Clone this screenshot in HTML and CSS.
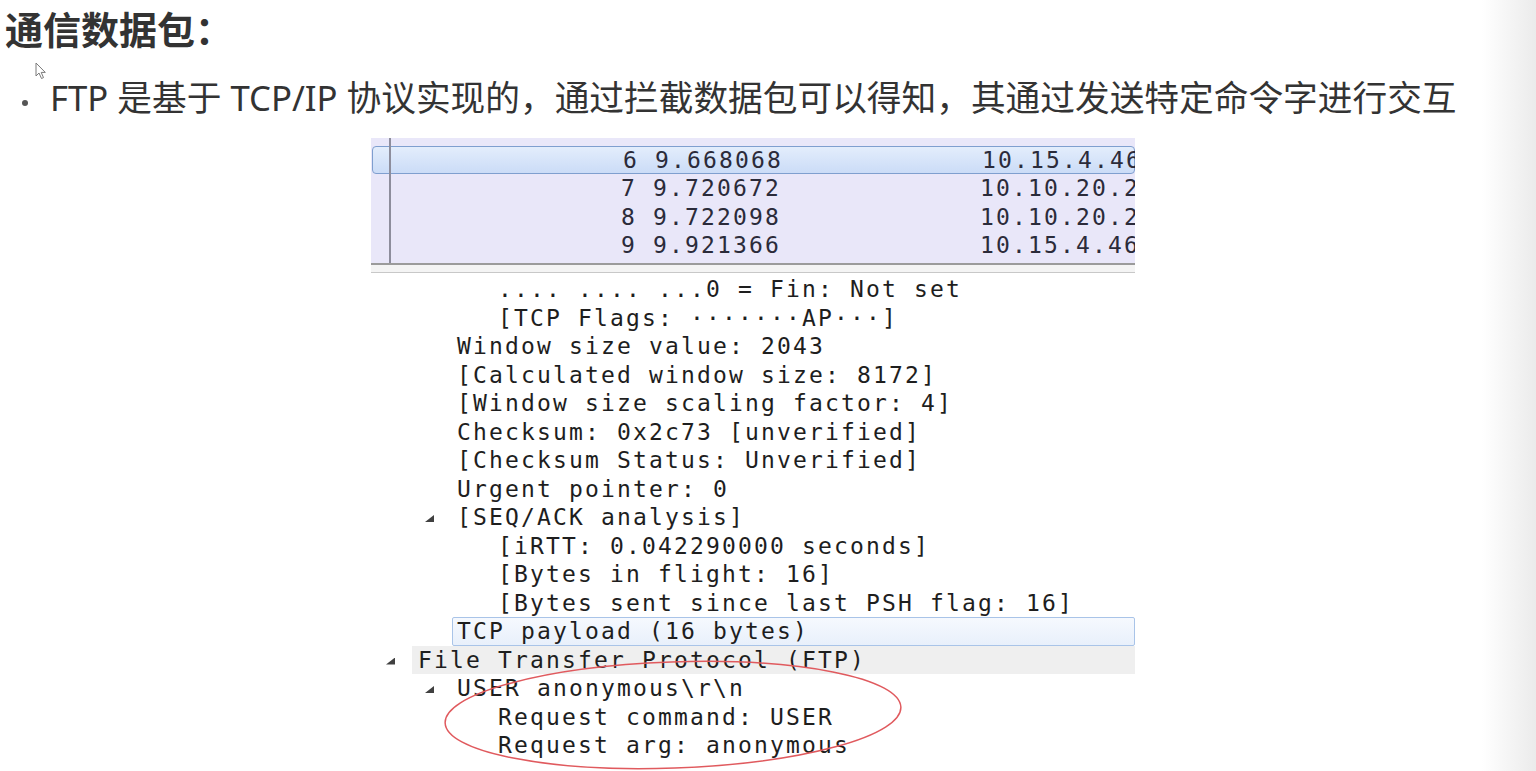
FILE: index.html
```html
<!DOCTYPE html>
<html lang="zh-CN">
<head>
<meta charset="utf-8">
<title>通信数据包</title>
<link rel="stylesheet" href="styles.css">
</head>
<body>
<div class="page">
  <h1 class="title">通信数据包：</h1>
  <div class="bullet"><span class="dot"></span><span class="btext">FTP 是基于 TCP/IP 协议实现的，通过拦截数据包可以得知，其通过发送特定命令字进行交互</span></div>
  <div class="shot">
    <div class="plist">
      <div class="prow sel"><span class="no">6</span><span class="time">9.668068</span><span class="ip">10.15.4.46</span></div>
      <div class="prow"><span class="no">7</span><span class="time">9.720672</span><span class="ip">10.10.20.2</span></div>
      <div class="prow"><span class="no">8</span><span class="time">9.722098</span><span class="ip">10.10.20.2</span></div>
      <div class="prow"><span class="no">9</span><span class="time">9.921366</span><span class="ip">10.15.4.46</span></div>
    </div>
    <div class="splitter"></div>
    <div class="details">
      <div class="drow l2">.... .... ...0 = Fin: Not set</div>
      <div class="drow l2">[TCP Flags: ·······AP···]</div>
      <div class="drow l1">Window size value: 2043</div>
      <div class="drow l1">[Calculated window size: 8172]</div>
      <div class="drow l1">[Window size scaling factor: 4]</div>
      <div class="drow l1">Checksum: 0x2c73 [unverified]</div>
      <div class="drow l1">[Checksum Status: Unverified]</div>
      <div class="drow l1">Urgent pointer: 0</div>
      <div class="drow l1 exp">[SEQ/ACK analysis]</div>
      <div class="drow l2">[iRTT: 0.042290000 seconds]</div>
      <div class="drow l2">[Bytes in flight: 16]</div>
      <div class="drow l2">[Bytes sent since last PSH flag: 16]</div>
      <div class="drow boxed">TCP payload (16 bytes)</div>
      <div class="drow grey exp">File Transfer Protocol (FTP)</div>
      <div class="drow l1 exp">USER anonymous\r\n</div>
      <div class="drow l2">Request command: USER</div>
      <div class="drow l2">Request arg: anonymous</div>
    </div>
    <svg class="ring" width="764" height="200" viewBox="0 0 764 200">
      <ellipse cx="302" cy="117" rx="228" ry="53" transform="rotate(-2 302 117)" fill="none" stroke="#e05a5e" stroke-width="1.5"/>
    </svg>
  </div>
  <svg class="cursor" width="13" height="18" viewBox="0 0 13 18">
    <path d="M1 1 L1 14 L4 11 L6.5 16.5 L8.5 15.6 L6.2 10.4 L10.3 10.4 Z" fill="#fff" stroke="#7a7a7a" stroke-width="1" stroke-linejoin="round"/>
  </svg>
</div>
</body>
</html>
```

FILE: styles.css
```css
html, body {
  margin: 0;
  padding: 0;
}

body {
  width: 1536px;
  height: 771px;
  overflow: hidden;
  background: linear-gradient(to right, #ffffff 1482px, #ebebeb 1536px);
  font-family: "Noto Sans", "Noto Sans CJK SC", sans-serif;
  color: #333;
}

.page {
  position: relative;
  height: 771px;
}

.title {
  margin: 0;
  padding: 9px 0 0 5px;
  font: 700 38px/38px "Noto Sans CJK SC", sans-serif;
  color: #333;
}

.bullet {
  display: flex;
  align-items: center;
  height: 34px;
  margin-top: 34px;
  padding-left: 22px;
}

.dot {
  width: 6px;
  height: 6px;
  border-radius: 50%;
  background: #555;
  margin-top: 9px;
  margin-right: 22px;
  flex: none;
}

.btext {
  font: 400 34.7px/34px "Noto Sans", "Noto Sans CJK SC", sans-serif;
  color: #333;
  white-space: nowrap;
}

.shot {
  position: relative;
  margin: 23px 0 0 371px;
  width: 764px;
  overflow: hidden;
  font: 400 23px/28.5px "DejaVu Sans Mono", "Liberation Mono", monospace;
  letter-spacing: 2.15px;
}

.plist {
  position: relative;
  background: #e9e7f9;
  padding: 7.5px 0 3.5px;
  color: #2b2b3a;
}

.plist::after {
  content: "";
  position: absolute;
  left: 18px;
  top: 0;
  bottom: 0;
  width: 2px;
  background: #8d8d9c;
}

.prow {
  display: grid;
  grid-template-columns: 266px 343px 1fr;
  height: 28.5px;
  box-sizing: border-box;
  white-space: pre;
}

.prow .no {
  text-align: right;
}

.prow .time {
  padding-left: 16px;
}

.prow.sel {
  background: linear-gradient(#e3edfc, #cbdcf7);
  border: 1px solid #7f9fcf;
  border-radius: 4px;
  margin-left: 1px;
  line-height: 26.5px;
}

.prow.sel .no {
  margin-left: -1px;
}

.splitter {
  height: 12px;
  box-sizing: border-box;
  border-top: 2px solid #9b9b9b;
  background: linear-gradient(#f4f4f4 0, #f4f4f4 7px, #c8c8c8 7px, #c8c8c8 8px, #ffffff 8px);
}

.details {
  background: #fff;
  color: #1e1e1e;
  padding-bottom: 20px;
}

.drow {
  height: 28.5px;
  white-space: pre;
  box-sizing: border-box;
}

.l1 {
  padding-left: 86px;
}

.l2 {
  padding-left: 127px;
}

.boxed {
  margin-left: 81px;
  padding-left: 4px;
  border: 1px solid #a9c4e8;
  border-radius: 2px;
  line-height: 26.5px;
  background: linear-gradient(#f6f9fe, #e8f0fb);
}

.grey {
  margin-left: 41px;
  padding-left: 6px;
  background: #efefef;
}

.exp::before {
  content: "";
  display: inline-block;
  width: 9px;
  height: 7px;
  margin-left: -32px;
  margin-right: 23px;
  vertical-align: 3px;
  background: #404040;
  clip-path: polygon(100% 0, 100% 100%, 0 100%);
}

.ring {
  position: absolute;
  left: 0;
  top: 460px;
}

.cursor {
  position: absolute;
  left: 35px;
  top: 62px;
}
```
